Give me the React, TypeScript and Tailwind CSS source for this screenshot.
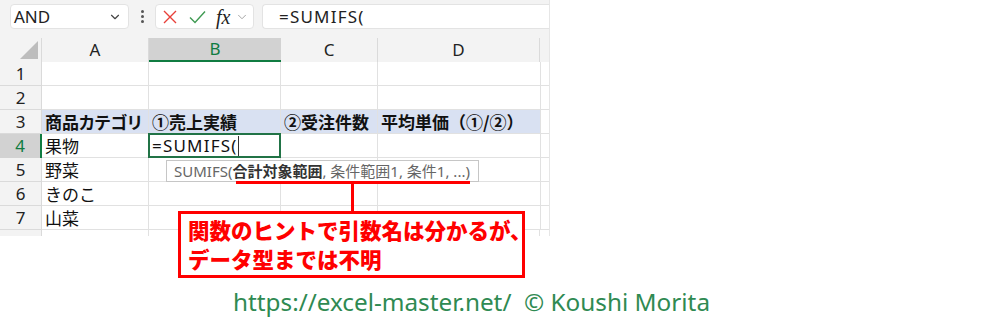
import { ChevronDown } from "lucide-react";

const FONT = { fontFamily: '"Noto Sans", "Noto Sans CJK JP", sans-serif' };
const JP = { fontFamily: '"Noto Sans CJK JP", "Noto Sans", sans-serif' };

const cols = [
  { name: "A", w: "w-[107px]" },
  { name: "B", w: "w-[132px]" },
  { name: "C", w: "w-[97px]" },
  { name: "D", w: "w-[162px]" },
];

const rows: Array<{ n: number; a?: string; bold?: boolean }> = [
  { n: 1 },
  { n: 2 },
  { n: 3, bold: true },
  { n: 4, a: "果物" },
  { n: 5, a: "野菜" },
  { n: 6, a: "きのこ" },
  { n: 7, a: "山菜" },
];

function Toolbar() {
  return (
    <div className="flex h-[38px] items-start bg-[#f3f3f3] pt-[4px]">
      <div className="ml-[10px] flex h-[25px] w-[119px] items-center justify-between rounded-[4px] border border-[#e3e3e3] bg-white pl-[3px] pr-[6px]">
        <span className="text-[17px] text-[#222]">AND</span>
        <ChevronDown className="h-[14px] w-[14px] text-[#444]" strokeWidth={2} />
      </div>
      <div className="flex h-[25px] w-[26px] flex-col items-center justify-center gap-[2px]">
        <span className="h-[3px] w-[3px] rounded-full bg-[#555]" />
        <span className="h-[3px] w-[3px] rounded-full bg-[#555]" />
        <span className="h-[3px] w-[3px] rounded-full bg-[#555]" />
      </div>
      <div className="flex h-[25px] w-[99px] items-center rounded-[4px] border border-[#e3e3e3] bg-white pl-[6px]">
        <svg width="14" height="14" viewBox="0 0 14 14" className="ml-[1px]">
          <path d="M1 1 L13 13 M13 1 L1 13" stroke="#e8403a" strokeWidth="1.4" fill="none" />
        </svg>
        <svg width="17" height="14" viewBox="0 0 17 14" className="ml-[12px]">
          <path d="M1 7.5 L6 12.5 L16 1.5" stroke="#3f9a52" strokeWidth="1.4" fill="none" />
        </svg>
        <span
          className="ml-[10px] text-[20px] italic leading-none text-[#222]"
          style={{ fontFamily: '"Liberation Serif", serif' }}
        >
          fx
        </span>
        <ChevronDown className="ml-[5px] h-[14px] w-[14px] text-[#999]" strokeWidth={1.5} />
      </div>
      <div className="ml-[8px] flex h-[25px] flex-1 items-center rounded-l-[4px] border border-r-0 border-[#e3e3e3] bg-white pl-[16px]">
        <span className="text-[17px] tracking-[1.2px] text-[#222]">=SUMIFS(</span>
      </div>
    </div>
  );
}

function Header() {
  return (
    <div className="flex h-[24px] bg-[#f3f3f3]">
      <div className="relative w-[42px] border-r border-[#dadada]">
        <div
          className="absolute bottom-[3px] right-[3px] h-[18px] w-[18px] bg-[#bdbdbd]"
          style={{ clipPath: "polygon(100% 0, 100% 100%, 0 100%)" }}
        />
      </div>
      {cols.map((c) => (
        <div
          key={c.name}
          className={
            c.name === "B"
              ? `${c.w} flex items-center justify-center border-b-2 border-[#107c41] bg-[#d2d2d2] text-[17px] text-[#107c41]`
              : `${c.w} flex items-center justify-center border-r border-[#dadada] text-[17px] text-[#222]`
          }
        >
          {c.name}
        </div>
      ))}
      <div className="flex-1" />
    </div>
  );
}

function Row({ r }: { r: (typeof rows)[number] }) {
  const active = r.n === 4;
  const blue = r.n === 3;
  return (
    <div className="flex h-[24px]">
      <div
        className={
          active
            ? "flex w-[42px] items-center justify-center border-r-2 border-[#107c41] bg-[#d2d2d2] text-[17px] text-[#107c41]"
            : "flex w-[42px] items-center justify-center border-r border-b border-[#dadada] bg-[#f3f3f3] text-[17px] text-[#222]"
        }
      >
        {r.n}
      </div>
      <div
        className={`flex w-[107px] items-center whitespace-nowrap border-r border-b border-[#e1e1e1] pl-[3px] text-[17px] text-[#111] ${blue ? "bg-[#d9e1f2] font-bold [font-feature-settings:'palt']" : ""}`}
        style={JP}
      >
        {blue ? "商品カテゴリ" : r.a}
      </div>
      <div
        className={`relative flex w-[132px] items-center border-r border-b border-[#e1e1e1] pl-[3px] text-[17px] text-[#111] ${blue ? "bg-[#d9e1f2] font-bold" : ""}`}
        style={JP}
      >
        {blue ? "①売上実績" : null}
        {active ? (
          <div className="absolute -left-px -top-px flex h-[25px] w-[133px] items-center border-2 border-[#217346] pl-[2px]">
            <span className="text-[17px] tracking-[1.2px] text-[#111]" style={FONT}>
              =SUMIFS(
            </span>
            <span className="h-[20px] w-px bg-[#333]" />
          </div>
        ) : null}
      </div>
      <div
        className={`flex w-[97px] items-center whitespace-nowrap border-r border-b border-[#e1e1e1] pl-[3px] text-[17px] text-[#111] ${blue ? "bg-[#d9e1f2] font-bold" : ""}`}
        style={JP}
      >
        {blue ? "②受注件数" : null}
      </div>
      <div
        className={`flex w-[162px] items-center whitespace-nowrap border-b border-[#e1e1e1] pl-[3px] text-[17px] text-[#111] ${blue ? "bg-[#d9e1f2] font-bold" : ""}`}
        style={JP}
      >
        {blue ? "平均単価（①/②）" : null}
      </div>
      <div className="flex-1 border-l border-b border-[#e1e1e1]" />
    </div>
  );
}

export default function App() {
  return (
    <div className="relative h-[322px] w-[1000px] overflow-hidden bg-white" style={FONT}>
      <div className="w-[550px] border-r border-[#e6e6e6]">
        <Toolbar />
        <Header />
        {rows.map((r) => (
          <Row key={r.n} r={r} />
        ))}
        <div className="flex h-[6px]">
          <div className="w-[42px] border-r border-[#dadada] bg-[#f3f3f3]" />
          <div className="w-[107px] border-r border-[#e1e1e1]" />
          <div className="w-[132px] border-r border-[#e1e1e1]" />
          <div className="w-[97px] border-r border-[#e1e1e1]" />
          <div className="w-[162px] border-r border-[#e1e1e1]" />
        </div>
      </div>

      {/* function hint tooltip */}
      <div
        className="absolute left-[166px] top-[160px] flex h-[22px] items-center border border-[#c6c6c6] bg-white pl-[7px] pr-[8px] text-[15px] text-[#666]"
        style={FONT}
      >
        SUMIFS(<span className="font-bold text-[#333]">合計対象範囲</span>, 条件範囲1, 条件1, ...)
      </div>

      {/* callout */}
      <div className="absolute left-[236px] top-[181px] h-[3px] w-[234px] bg-[#ff0000]" />
      <div className="absolute left-[351px] top-[183px] h-[30px] w-[3px] bg-[#ff0000]" />
      <div
        className="absolute left-[178px] top-[211px] h-[67px] w-[347px] whitespace-nowrap border-[3px] border-[#ff0000] bg-white pl-[7px] pt-[1px] text-[21.5px] font-black leading-[29px] text-[#ff0000]"
        style={JP}
      >
        <div>関数のヒントで引数名は分かるが、</div>
        <div>データ型までは不明</div>
      </div>

      <div className="mt-[52px] pl-[233px] text-[24.3px] leading-[28px] text-[#2f8a52]" style={FONT}>
        https://excel-master.net/&nbsp;&nbsp;© Koushi Morita
      </div>
    </div>
  );
}
